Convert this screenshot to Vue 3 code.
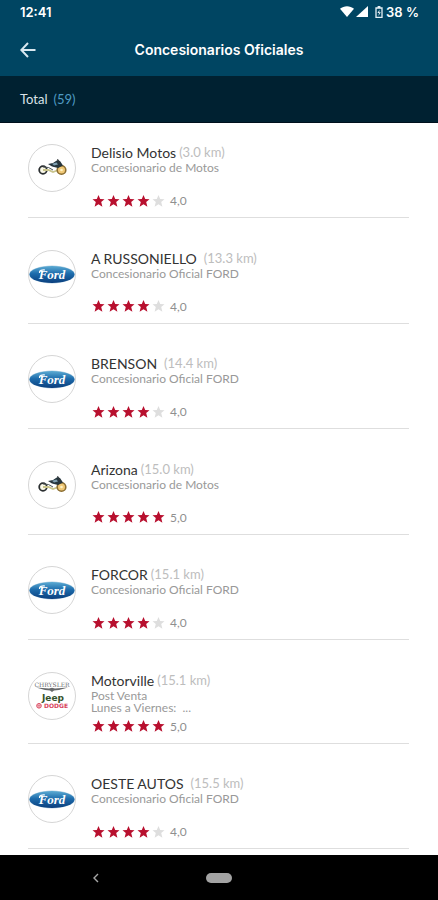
<template>
  <div class="page">
    <header class="header">
      <div class="status">
        <span>12:41</span>
        <div class="status-icons">
          <svg width="14" height="11" viewBox="0 0 14 11">
            <path d="M0 2.8C4 -.6 10 -.6 14 2.8L7 11Z" fill="#fff" />
          </svg>
          <svg width="12" height="11" viewBox="0 0 12 11">
            <path d="M12 0V11H0Z" fill="#fff" />
          </svg>
          <svg class="battery" width="8" height="12" viewBox="0 0 8 12">
            <path d="M1 2H7V11.3H1Z" fill="none" stroke="#e6f0f5" stroke-width="1.3" />
            <path d="M2.6 0H5.4V2H2.6Z" fill="#e6f0f5" />
            <path d="M4.6 3.4L2.4 7H4L3.4 10L5.8 6.3H4.2Z" fill="#e6f0f5" />
          </svg>
          <span>38 %</span>
        </div>
      </div>
      <div class="title-bar">
        <button class="back" type="button" aria-label="Volver">
          <svg width="16" height="16" viewBox="0 0 16 16">
            <path d="M15.5 8H1.5M8 1L1.3 8L8 15" fill="none" stroke="#d9e8f0" stroke-width="2" />
          </svg>
        </button>
        <h1>Concesionarios Oficiales</h1>
      </div>
    </header>

    <div class="total">
      <span>Total</span>
      <span class="count">(59)</span>
    </div>

    <ul class="list">
      <li v-for="item in dealers" :key="item.name" class="item">
        <div class="logo">
          <!-- moto -->
          <svg v-if="item.logo === 'moto'" width="46" height="46" viewBox="0 0 46 46">
            <circle cx="14" cy="25" r="3.8" fill="#fbf9e8" stroke="#2b2f31" stroke-width="1.8" />
            <path d="M14 25H19.5L24 27L28 25.5" fill="none" stroke="#c9c48c" stroke-width="1.8" />
            <circle cx="32.5" cy="25" r="4.3" fill="#f0c876" stroke="#8a6d30" stroke-width="1.6" />
            <circle cx="32.5" cy="25" r="1.3" fill="#fff3c4" />
            <path d="M14 22L19.5 22.5L24 25" fill="none" stroke="#4d5556" stroke-width="1" />
            <path d="M19 19L24 18L28.5 15L31 16L34 20.5L29 23L23 21.5Z" fill="#26353d" />
            <path d="M23 18.7L27.5 17.5L29 19.5L25 20.5Z" fill="#7f9fb0" />
            <path d="M28.5 14L31 18.5" stroke="#34383a" stroke-width="1" />
          </svg>
          <!-- ford -->
          <svg v-else-if="item.logo === 'ford'" width="46" height="46" viewBox="0 0 46 46">
            <defs>
              <linearGradient id="oval" x1="0" y1="0" x2="0" y2="1">
                <stop offset="0" stop-color="#5cabd3" />
                <stop offset=".45" stop-color="#1d6cac" />
                <stop offset="1" stop-color="#0b3f7e" />
              </linearGradient>
            </defs>
            <ellipse cx="23" cy="23.5" rx="23" ry="9" fill="#b9d3e4" />
            <ellipse cx="23" cy="23.5" rx="22.5" ry="8.4" fill="url(#oval)" />
            <path d="M10.5 22C10 19.5 13 18.6 16 19" fill="none" stroke="#fff" stroke-width="1.2" />
            <text x="23" y="28" class="ford-text">Ford</text>
          </svg>
          <!-- chrysler, jeep, dodge -->
          <svg v-else width="46" height="46" viewBox="0 0 46 46">
            <text x="23" y="14" class="chrysler-text">CHRYSLER</text>
            <path d="M7 14.5L20 15.6L23 14.8L26 15.6L39 14.5L30 17L25 17.5L23 19L21 17.5L16 17Z" fill="#66686a" />
            <text x="24" y="28" class="jeep-text">Jeep</text>
            <circle cx="10" cy="32.8" r="2.3" fill="none" stroke="#d8425a" stroke-width="1" />
            <path d="M8 32.8H12M10 30.8V34.8" stroke="#d8425a" stroke-width=".7" />
            <text x="27" y="35" class="dodge-text">DODGE</text>
          </svg>
        </div>
        <div class="info">
          <h2>
            <span>{{ item.name }}</span>
            <span class="distance" :class="{ wide: item.wide }">({{ item.distance }} km)</span>
          </h2>
          <p :class="{ multiline: item.multiline }">{{ item.description }}</p>
          <div class="rating">
            <svg v-for="n in 5" :key="n" width="15" height="14" viewBox="0 0 15 14">
              <path
                d="M7.5 1L9.2 5.1L13.5 5.3L10.2 8.1L11.4 12.8L7.5 10.2L3.6 12.8L4.8 8.1L1.5 5.3L5.8 5.1Z"
                :fill="n <= item.stars ? '#b80f2e' : '#dedede'"
              />
            </svg>
            <span>{{ item.stars }},0</span>
          </div>
        </div>
      </li>
    </ul>

    <nav class="nav">
      <button class="nav-back" type="button" aria-label="Atrás">
        <svg width="8" height="10" viewBox="0 0 8 10">
          <path d="M6 1L2 5L6 9" fill="none" stroke="#a8a8a8" stroke-width="1.4" />
        </svg>
      </button>
      <button class="home" type="button" aria-label="Inicio"></button>
    </nav>
  </div>
</template>

<script setup>
import { ref } from "vue";

// wide: más separación entre el nombre y la distancia
// multiline: la descripción ocupa dos líneas
const dealers = ref([
  { name: "Delisio Motos", distance: "3.0", description: "Concesionario de Motos", stars: 4, logo: "moto" },
  { name: "A RUSSONIELLO", distance: "13.3", description: "Concesionario Oficial FORD", stars: 4, logo: "ford", wide: true },
  { name: "BRENSON", distance: "14.4", description: "Concesionario Oficial FORD", stars: 4, logo: "ford", wide: true },
  { name: "Arizona", distance: "15.0", description: "Concesionario de Motos", stars: 5, logo: "moto" },
  { name: "FORCOR", distance: "15.1", description: "Concesionario Oficial FORD", stars: 4, logo: "ford" },
  { name: "Motorville", distance: "15.1", description: "Post Venta\nLunes a Viernes:  ...", stars: 5, logo: "fca", multiline: true },
  { name: "OESTE AUTOS", distance: "15.5", description: "Concesionario Oficial FORD", stars: 4, logo: "ford", wide: true },
]);
</script>

<style>
body {
  margin: 0;
  background: #fff;
}
</style>

<style scoped>
.page {
  display: flex;
  flex-direction: column;
  min-height: 100vh;
  font-family: Lato, "Open Sans", sans-serif;
}

button {
  padding: 0;
  border: none;
  background: none;
  cursor: pointer;
}

/* Cabecera */
.header {
  background: #004562;
  color: #fff;
  font-family: Inter, sans-serif;
}

.status {
  display: flex;
  justify-content: space-between;
  align-items: center;
  height: 23px;
  padding: 0 19px 0 20px;
  font-size: 13px;
  font-weight: 600;
}

.status-icons {
  display: flex;
  align-items: center;
  gap: 2px;
}

.battery {
  margin: 0 1px 0 5px;
}

.title-bar {
  display: grid;
  grid-template-columns: 16px 1fr 16px;
  align-items: center;
  height: 53px;
  padding: 0 20px;
}

.back {
  display: flex;
}

h1 {
  margin: 0;
  text-align: center;
  font-size: 14px;
  font-weight: 600;
}

.total {
  display: flex;
  align-items: center;
  gap: 6px;
  height: 46px;
  padding: 0 20px;
  border-bottom: 1px solid #00101c;
  background: #002131;
  color: #dbe3e8;
  font-size: 13px;
}

.count {
  color: #4f9cc4;
}

/* Lista */
.list {
  display: flex;
  flex: 1;
  flex-direction: column;
  justify-content: space-between;
  margin: 0;
  padding: 0 29px 6px 28px;
  list-style: none;
}

.item {
  display: flex;
  gap: 15px;
  padding: 21px 0 8px;
  border-bottom: 1px solid #dedede;
}

.logo {
  flex: none;
  width: 46px;
  height: 46px;
  border: 1px solid #d6d6d6;
  border-radius: 50%;
  overflow: hidden;
}

.logo svg {
  display: block;
}

.ford-text {
  fill: #fff;
  font: italic bold 13px "Liberation Serif", serif;
  text-anchor: middle;
}

.chrysler-text {
  fill: #6c6e70;
  font: 6px "DejaVu Serif", serif;
  text-anchor: middle;
}

.jeep-text {
  fill: #35522c;
  font: bold 9px "DejaVu Sans", sans-serif;
  text-anchor: middle;
}

.dodge-text {
  fill: #d8425a;
  font: bold 6px "DejaVu Sans", sans-serif;
  text-anchor: middle;
}

.info {
  min-width: 0;
}

h2 {
  display: flex;
  gap: 3px;
  margin: 0 0 1px;
  color: #333;
  font-size: 14px;
  font-weight: 400;
  line-height: 17px;
}

.distance {
  color: #bdbdbd;
  font-size: 13px;
}

.wide {
  margin-left: 4px;
}

p {
  min-height: 26px;
  margin: 0 0 4px;
  color: #999;
  font-size: 12px;
  line-height: 12px;
  white-space: pre-wrap;
}

.multiline {
  min-height: 24px;
}

.rating {
  display: flex;
  align-items: center;
  height: 17px;
  color: #8f8f8f;
  font-size: 12px;
}

.rating span {
  margin-left: 4px;
}

/* Barra de navegación */
.nav {
  display: grid;
  grid-template-columns: 1fr auto 1fr;
  align-items: center;
  height: 45px;
  background: #000;
}

.nav-back {
  display: flex;
  justify-self: center;
  padding-right: 14px;
}

.home {
  width: 26px;
  height: 10px;
  border-radius: 5px;
  background: #a3a3a3;
}
</style>
